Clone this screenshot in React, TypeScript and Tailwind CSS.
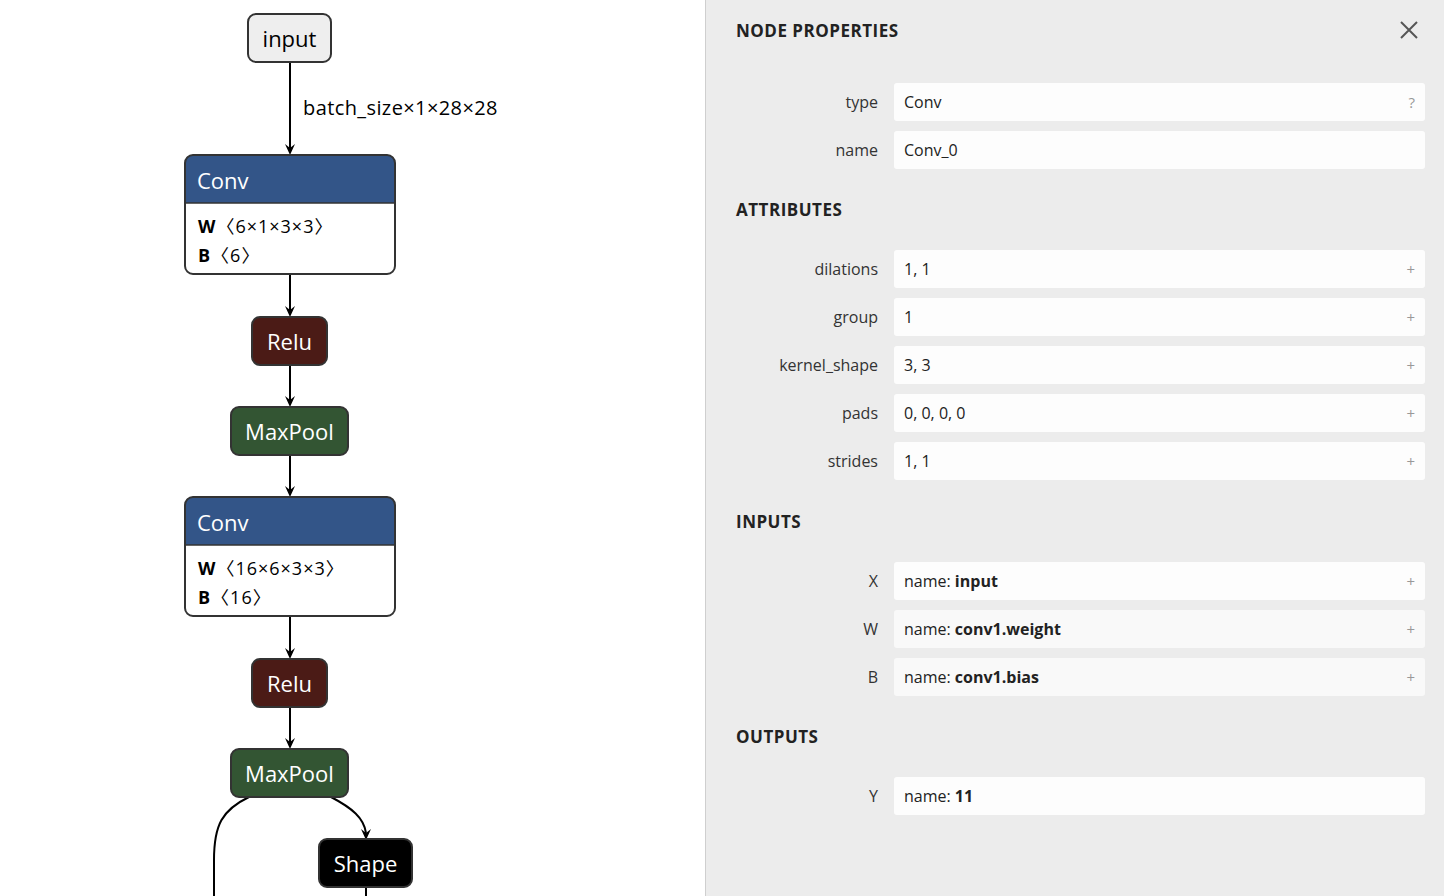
import React from 'react';

const graphFont = { fontFamily: '"Open Sans", "Noto Sans CJK SC", "DejaVu Sans", sans-serif' };

const Arrow = ({ x, y }: { x: number; y: number }) => (
  <path d={`M ${x - 5} ${y - 11} L ${x} ${y} L ${x + 5} ${y - 11} L ${x} ${y - 7} Z`} fill="#000" />
);

const Edge = ({ x, y1, y2 }: { x: number; y1: number; y2: number }) => (
  <g>
    <line x1={x} y1={y1} x2={x} y2={y2 - 6} stroke="#000" strokeWidth={2} />
    <Arrow x={x} y={y2} />
  </g>
);

const SimpleNode = ({ x, y, w, label, fill, textFill = '#fff' }: { x: number; y: number; w: number; label: string; fill: string; textFill?: string }) => (
  <g>
    <rect x={x} y={y} width={w} height={48} rx={8} fill={fill} stroke="#333" strokeWidth={2} />
    <text x={x + w / 2} y={y + 33} textAnchor="middle" fontSize={22} fill={textFill}>
      {label}
    </text>
  </g>
);

const ConvNode = ({ y, w, b }: { y: number; w: string; b: string }) => (
  <g>
    <path d={`M 185 ${y + 48} L 185 ${y + 8} Q 185 ${y} 193 ${y} L 387 ${y} Q 395 ${y} 395 ${y + 8} L 395 ${y + 48} Z`} fill="#335588" />
    <path d={`M 185 ${y + 48} L 395 ${y + 48} L 395 ${y + 111} Q 395 ${y + 119} 387 ${y + 119} L 193 ${y + 119} Q 185 ${y + 119} 185 ${y + 111} Z`} fill="#fff" />
    <line x1={185} y1={y + 48} x2={395} y2={y + 48} stroke="#333" strokeWidth={1.5} />
    <rect x={185} y={y} width={210} height={119} rx={8} fill="none" stroke="#333" strokeWidth={2} />
    <text x={197} y={y + 34} fontSize={22} fill="#fff">Conv</text>
    <text x={198} y={y + 78} fontSize={18} fill="#000" letterSpacing={1}>
      <tspan fontWeight={700}>W</tspan>
      <tspan>〈{w}〉</tspan>
    </text>
    <text x={198} y={y + 107} fontSize={18} fill="#000" letterSpacing={1}>
      <tspan fontWeight={700}>B</tspan>
      <tspan>〈{b}〉</tspan>
    </text>
  </g>
);

const Graph = () => (
  <svg width={705} height={896} className="block" style={graphFont}>
    <Edge x={290} y1={62} y2={155} />
    <text x={303} y={115} fontSize={20} fill="#000" letterSpacing={0.4}>batch_size×1×28×28</text>
    <Edge x={290} y1={274} y2={317} />
    <Edge x={290} y1={365} y2={407} />
    <Edge x={290} y1={455} y2={497} />
    <Edge x={290} y1={616} y2={659} />
    <Edge x={290} y1={707} y2={749} />
    <path d="M 249 797 C 222 810 214 825 214 860 L 214 896" fill="none" stroke="#000" strokeWidth={2} />
    <path d="M 331 797 C 352 808 364 818 366 833" fill="none" stroke="#000" strokeWidth={2} />
    <Arrow x={366} y={840} />
    <line x1={366} y1={888} x2={366} y2={896} stroke="#000" strokeWidth={2} />

    <SimpleNode x={248} y={14} w={83} label="input" fill="#eeeeee" textFill="#000" />
    <ConvNode y={155} w="6×1×3×3" b="6" />
    <SimpleNode x={252} y={317} w={75} label="Relu" fill="#4b1b16" />
    <SimpleNode x={231} y={407} w={117} label="MaxPool" fill="#335533" />
    <ConvNode y={497} w="16×6×3×3" b="16" />
    <SimpleNode x={252} y={659} w={75} label="Relu" fill="#4b1b16" />
    <SimpleNode x={231} y={749} w={117} label="MaxPool" fill="#335533" />
    <SimpleNode x={319} y={839} w={93} label="Shape" fill="#000" />
  </svg>
);

type Row = { label: string; value: React.ReactNode; mark?: string; tint?: boolean };

const Heading = ({ children, className = '' }: { children: React.ReactNode; className?: string }) => (
  <div className={`text-[17px] font-bold tracking-[0.5px] text-[#222] leading-[24px] ${className}`}>{children}</div>
);

const PropRow = ({ label, value, mark, tint }: Row) => (
  <div className="flex items-center gap-4 h-[38px]">
    <div className="w-[142px] text-right text-[16px] text-[#333]">{label}</div>
    <div className={`flex-1 h-[38px] rounded-[3px] flex items-center justify-between pl-[10px] pr-[10px] text-[16px] text-[#222] ${tint ? 'bg-[#f9f9f9]' : 'bg-[#fdfdfd]'}`}>
      <span>{value}</span>
      {mark && <span className="text-[15px] text-[#999999]">{mark}</span>}
    </div>
  </div>
);

const Rows = ({ rows }: { rows: Row[] }) => (
  <div className="flex flex-col gap-[10px]">
    {rows.map((r) => (
      <PropRow key={r.label} {...r} />
    ))}
  </div>
);

const Named = ({ n }: { n: string }) => (
  <>
    name: <b className="font-bold">{n}</b>
  </>
);

const Sidebar = () => (
  <div
    className="w-[739px] h-[896px] bg-[#ececec] border-l border-[#cfcfcf] pl-[30px] pr-[19px] flex flex-col"
    style={{ fontFamily: '"Open Sans", "Liberation Sans", sans-serif' }}
  >
    <div className="flex items-center justify-between h-[24px] mt-[19px]">
      <Heading>NODE PROPERTIES</Heading>
      <svg width="18" height="18" viewBox="0 0 18 18" className="mr-[7px] -mt-[2px]">
        <path d="M1 1 L17 17 M17 1 L1 17" stroke="#555" strokeWidth="2" />
      </svg>
    </div>
    <div className="mt-[40px]">
      <Rows
        rows={[
          { label: 'type', value: 'Conv', mark: '?' },
          { label: 'name', value: 'Conv_0' },
        ]}
      />
    </div>
    <Heading className="mt-[29px]">ATTRIBUTES</Heading>
    <div className="mt-[28px]">
      <Rows
        rows={[
          { label: 'dilations', value: '1, 1', mark: '+' },
          { label: 'group', value: '1', mark: '+' },
          { label: 'kernel_shape', value: '3, 3', mark: '+' },
          { label: 'pads', value: '0, 0, 0, 0', mark: '+' },
          { label: 'strides', value: '1, 1', mark: '+' },
        ]}
      />
    </div>
    <Heading className="mt-[30px]">INPUTS</Heading>
    <div className="mt-[28px]">
      <Rows
        rows={[
          { label: 'X', value: <Named n="input" />, mark: '+' },
          { label: 'W', value: <Named n="conv1.weight" />, mark: '+', tint: true },
          { label: 'B', value: <Named n="conv1.bias" />, mark: '+', tint: true },
        ]}
      />
    </div>
    <Heading className="mt-[29px]">OUTPUTS</Heading>
    <div className="mt-[28px]">
      <Rows rows={[{ label: 'Y', value: <Named n="11" /> }]} />
    </div>
  </div>
);

export default function App() {
  return (
    <div className="flex w-[1444px] h-[896px] overflow-hidden bg-white">
      <div className="w-[705px] h-[896px]">
        <Graph />
      </div>
      <Sidebar />
    </div>
  );
}
